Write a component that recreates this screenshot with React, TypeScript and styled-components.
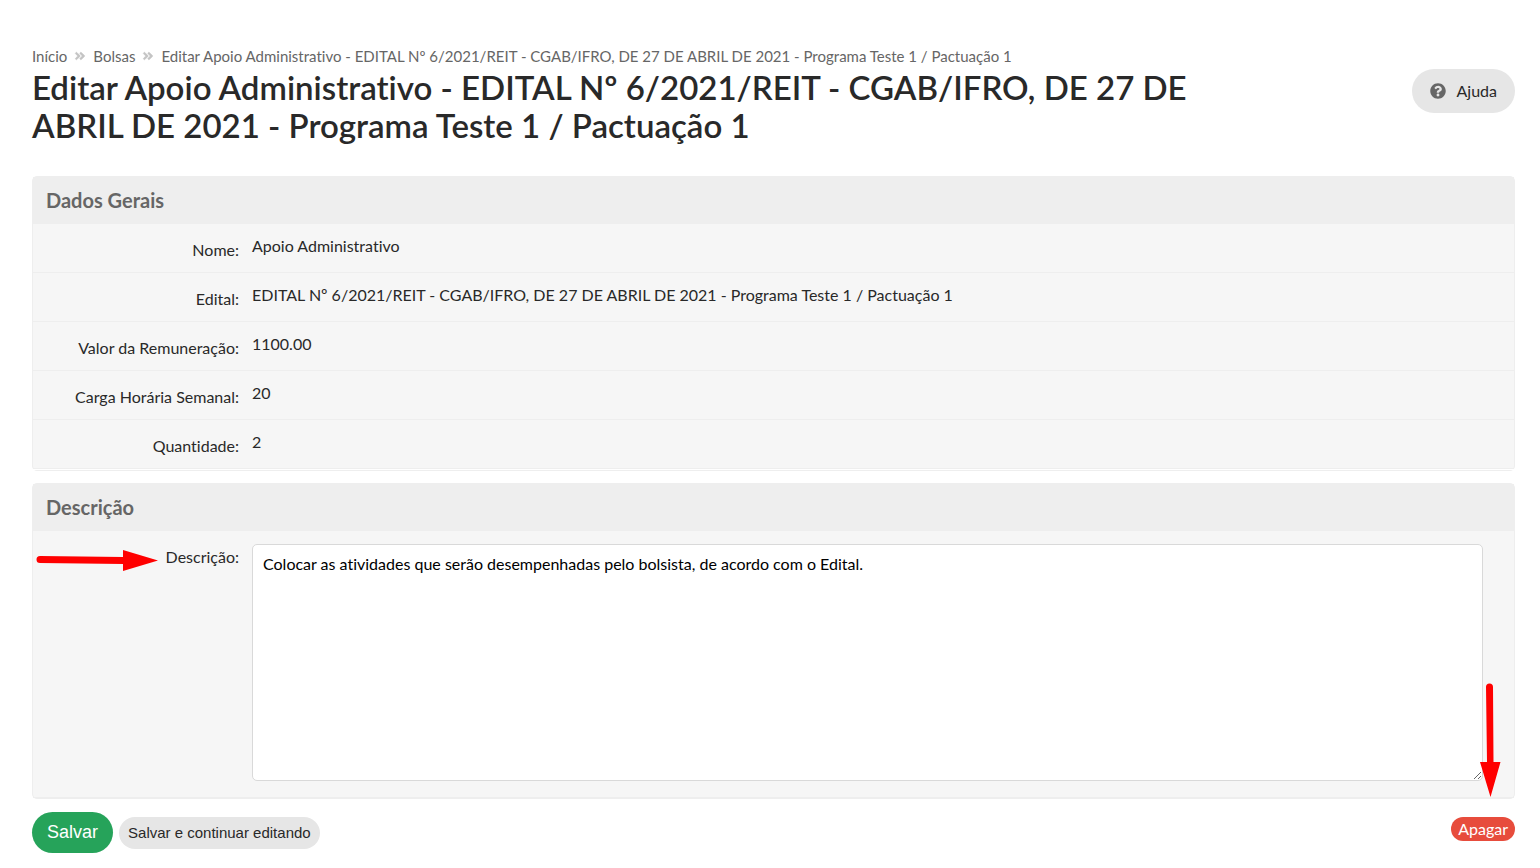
import React from "react";
import styled, { createGlobalStyle } from "styled-components";
import { FaAngleDoubleRight, FaQuestionCircle } from "react-icons/fa";

const GlobalStyle = createGlobalStyle`
  *, *::before, *::after { box-sizing: border-box; }
  body {
    margin: 0;
    background: #fff;
    color: #292929;
    font-family: Lato, "Liberation Sans", sans-serif;
    font-size: 16px;
    font-variant-ligatures: none;
    line-height: 24px;
  }
`;

const Page = styled.main`
  padding: 47px 25px 15px 32px;
`;

const Breadcrumb = styled.ol`
  display: flex;
  align-items: center;
  gap: 7px;
  margin: 0;
  padding: 0;
  list-style: none;
  font-size: 15px;
  line-height: 18px;
  color: #666;
`;

const Crumb = styled.li`
  display: flex;
  align-items: center;
  gap: 7px;

  svg {
    color: #c4c4c4;
    stroke: currentColor;
    stroke-width: 24px;
  }
`;

const CrumbLink = styled.a`
  color: inherit;
  text-decoration: none;
`;

const TitleBar = styled.header`
  display: flex;
  align-items: flex-start;
  justify-content: space-between;
  gap: 40px;
  margin-top: 3px;
`;

const Title = styled.h1`
  flex: 1;
  max-width: 1220px;
  margin: 0;
  font-size: 33px;
  font-weight: 600;
  line-height: 38px;
`;

const HelpButton = styled.button`
  display: flex;
  align-items: center;
  gap: 11px;
  height: 44px;
  margin-top: 1px;
  padding: 0 18px;
  border: 0;
  border-radius: 22px;
  background: #e6e6e6;
  color: #292929;
  font: inherit;

  svg { color: #666; }
`;

const Form = styled.form`
  display: flex;
  flex-direction: column;
  gap: 12px;
  margin-top: 32px;
`;

const Panel = styled.section`
  position: relative;
  border: 1px solid #eee;
  border-radius: 5px;
  background: #f6f6f6;
`;

const PanelTitle = styled.h2`
  margin: 0;
  padding: 11px 13px 12px;
  background: #eee;
  color: #666;
  font-size: 20px;
  font-weight: 700;
  line-height: 24px;
`;

const Fields = styled.dl`
  margin: 0;
  border-bottom: 1px solid #fff;
`;

const Field = styled.div`
  display: grid;
  grid-template-columns: 206px 1fr;
  column-gap: 13px;
  height: 49px;
  border-bottom: 1px solid #eee;
`;

const FieldName = styled.dt`
  padding-top: 14px;
  text-align: right;
`;

const FieldValue = styled.dd`
  margin: 0;
  padding-top: 10px;
`;

const EditField = styled.div`
  display: grid;
  grid-template-columns: 206px 1fr;
  column-gap: 13px;
  padding: 13px 31px 16px 0;
  border-bottom: 1px solid #eee;
`;

const Label = styled.label`
  padding-top: 1px;
  text-align: right;
`;

const TextArea = styled.textarea`
  display: block;
  width: 100%;
  height: 237px;
  padding: 7px 10px;
  border: 1px solid #d9d9d9;
  border-radius: 5px;
  background: #fff;
  color: #000;
  font: inherit;
  font-variant-ligatures: none;
  resize: both;
`;

const Actions = styled.div`
  display: flex;
  align-items: center;
  gap: 6px;
  margin-top: 1px;
`;

const SaveButton = styled.button<{ $primary?: boolean }>`
  height: ${(p) => (p.$primary ? 41 : 32)}px;
  padding: 0 ${(p) => (p.$primary ? 15 : 9)}px;
  border: 0;
  border-radius: 21px;
  background: ${(p) => (p.$primary ? "#26a35a" : "#e6e6e6")};
  color: ${(p) => (p.$primary ? "#fff" : "#292929")};
  font-family: "Liberation Sans", Arial, sans-serif;
  font-size: ${(p) => (p.$primary ? 18 : 15)}px;
`;

const DeleteLink = styled.a`
  margin-left: auto;
  margin-bottom: 7px;
  padding: 0 7px;
  border-radius: 12px;
  background: #e74c3c;
  color: #fff;
  text-decoration: none;
`;

const Arrow = styled.svg<{ $down?: boolean }>`
  position: absolute;
  z-index: 1;
  pointer-events: none;
  fill: #f00;
  ${(p) => (p.$down ? "right: 13px; bottom: 1px;" : "left: 3px; top: 65px;")}
`;

const fields = [
  ["Nome:", "Apoio Administrativo"],
  ["Edital:", "EDITAL Nº 6/2021/REIT - CGAB/IFRO, DE 27 DE ABRIL DE 2021 - Programa Teste 1 / Pactuação 1"],
  ["Valor da Remuneração:", "1100.00"],
  ["Carga Horária Semanal:", "20"],
  ["Quantidade:", "2"],
];

const pageTitle =
  "Editar Apoio Administrativo - EDITAL Nº 6/2021/REIT - CGAB/IFRO, DE 27 DE ABRIL DE 2021 - Programa Teste 1 / Pactuação 1";

export default function App() {
  return (
    <>
      <GlobalStyle />
      <Page>
        <nav>
          <Breadcrumb>
            <Crumb><CrumbLink href="#inicio">Início</CrumbLink></Crumb>
            <Crumb>
              <FaAngleDoubleRight size={12} />
              <CrumbLink href="#bolsas">Bolsas</CrumbLink>
            </Crumb>
            <Crumb>
              <FaAngleDoubleRight size={12} />
              {pageTitle}
            </Crumb>
          </Breadcrumb>
        </nav>
        <TitleBar>
          <Title>{pageTitle}</Title>
          <HelpButton type="button">
            <FaQuestionCircle size={16} />
            Ajuda
          </HelpButton>
        </TitleBar>
        <Form onSubmit={(e) => e.preventDefault()}>
          <Panel>
            <PanelTitle>Dados Gerais</PanelTitle>
            <Fields>
              {fields.map(([name, value]) => (
                <Field key={name}>
                  <FieldName>{name}</FieldName>
                  <FieldValue>{value}</FieldValue>
                </Field>
              ))}
            </Fields>
          </Panel>
          <Panel>
            <PanelTitle>Descrição</PanelTitle>
            <EditField>
              <Label htmlFor="descricao">Descrição:</Label>
              <TextArea
                id="descricao"
                defaultValue="Colocar as atividades que serão desempenhadas pelo bolsista, de acordo com o Edital."
              />
            </EditField>
            <Arrow width="122" height="22" viewBox="0 0 122 22" aria-hidden="true">
              <path d="M4 7 L87 8 V1 L122 11.500 L87 22 V15 L4 14 A3.500 3.500 0 0 1 4 7Z" />
            </Arrow>
            <Arrow $down width="22" height="114" viewBox="0 0 22 114" aria-hidden="true">
              <path d="M7 4 A3.500 3.500 0 0 1 14 4 L14.500 79 H21.500 L11.500 114 L1 79 H8Z" />
            </Arrow>
          </Panel>
          <Actions>
            <SaveButton $primary type="submit">Salvar</SaveButton>
            <SaveButton type="submit">Salvar e continuar editando</SaveButton>
            <DeleteLink href="#apagar">Apagar</DeleteLink>
          </Actions>
        </Form>
      </Page>
    </>
  );
}
